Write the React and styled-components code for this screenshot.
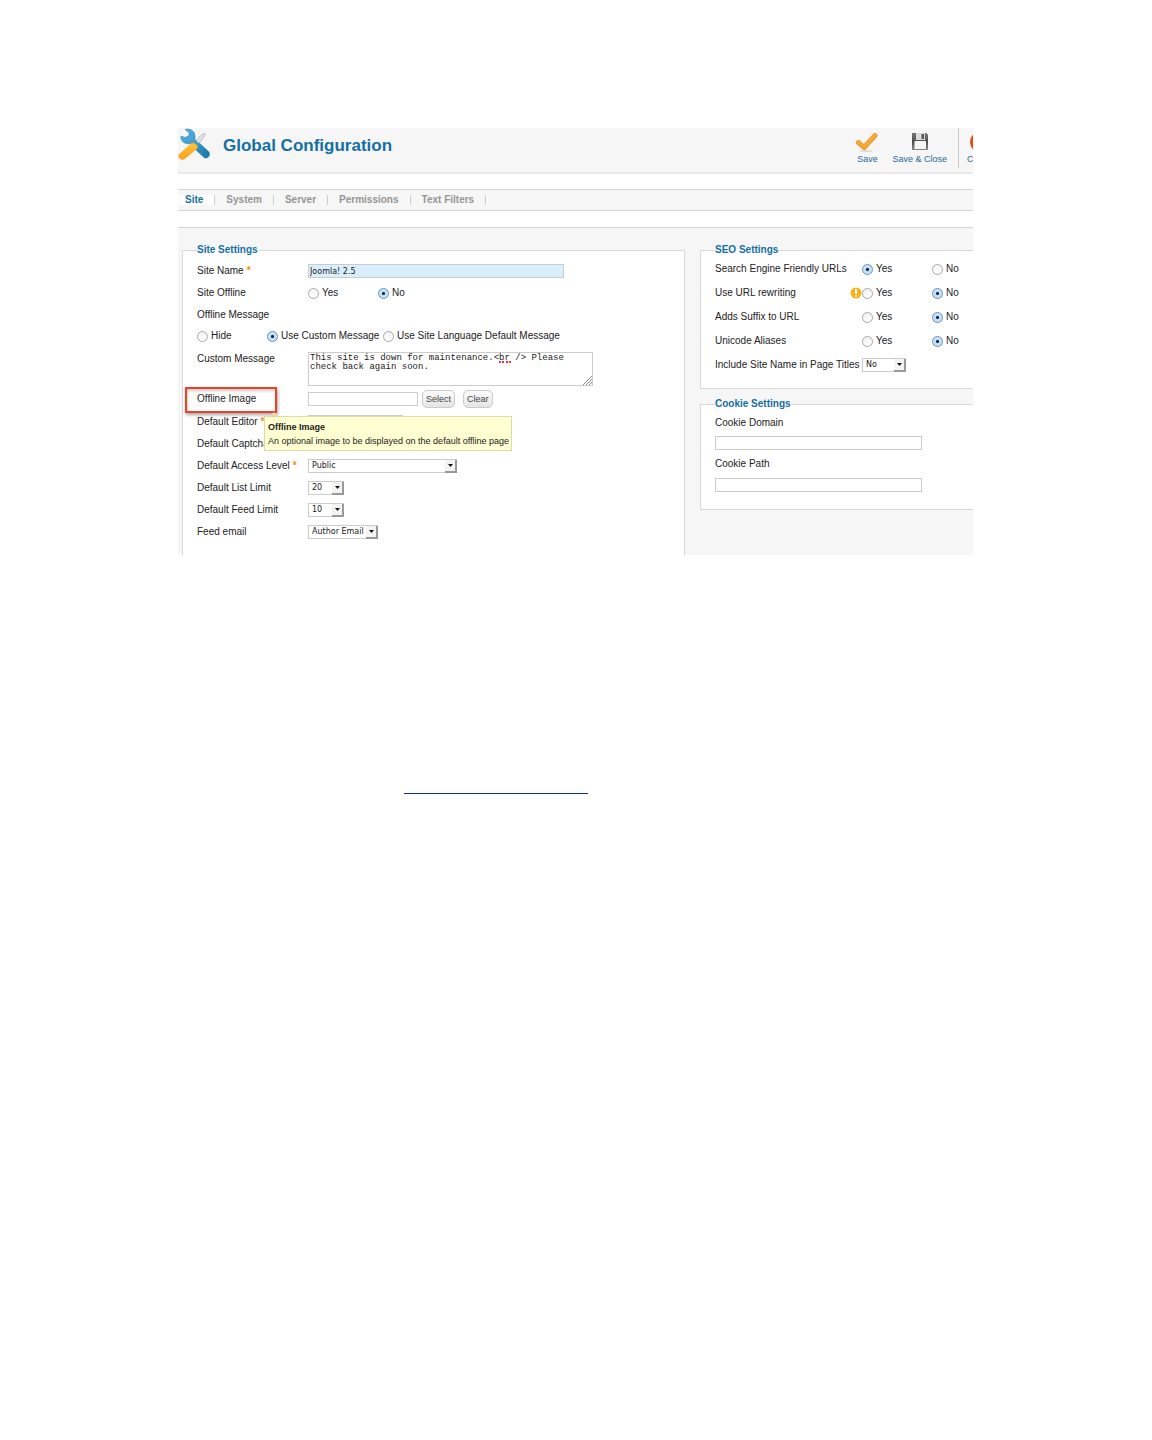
import React from "react";
import styled, { createGlobalStyle } from "styled-components";

const GlobalStyle = createGlobalStyle`
  * {
    box-sizing: border-box;
  }

  body {
    margin: 0;
    background-color: white;
    color: #222222;
    font-family: "Liberation Sans", Arial, sans-serif;
    font-size: 10px;
    line-height: 14px;
  }
`;

const Page = styled.div`
  padding: 128px 179px 40px 178px;
`;

const Screen = styled.main`
  overflow: hidden;
`;

const Header = styled.header`
  display: flex;
  height: 46px;
  background-color: #f6f6f6;
  border-bottom: 2px solid #e9e9e9;
`;

const Title = styled.h1`
  margin: 0 0 0 12px;
  color: #146fa5;
  font-size: 17px;
  line-height: 36px;
`;

const Toolbar = styled.div`
  display: flex;
  align-items: flex-start;
  margin-left: auto;
  margin-right: -22px;
`;

const ToolButton = styled.button`
  display: flex;
  flex-direction: column;
  align-items: center;
  padding: 4px 0 0;
  margin-right: ${(props) => props.$space || 0}px;
  border: none;
  background: none;
  color: #27699a;
  font-family: inherit;
  font-size: 9px;
  line-height: 12px;
  white-space: nowrap;
`;

const Divider = styled.div`
  width: 1px;
  height: 40px;
  margin: 0 8px 0 11px;
  background-color: #cccccc;
`;

const Tabs = styled.nav`
  display: flex;
  align-items: center;
  height: 22px;
  margin: 15px 0 16px;
  background-color: #f6f6f6;
  border-top: 1px solid #d5d5d5;
  border-bottom: 1px solid #d5d5d5;
`;

const Tab = styled.a`
  padding: 0 11px;
  border-right: 1px solid #cccccc;
  background-color: ${(props) => (props.$active ? "white" : "transparent")};
  color: ${(props) => (props.$active ? "#146fa5" : "#959595")};
  font-weight: bold;
  line-height: 10px;
  text-decoration: none;

  &:first-child {
    padding-left: 7px;
  }
`;

const Content = styled.form`
  display: grid;
  grid-template-columns: minmax(0, 503fr) minmax(0, 273fr);
  gap: 15px;
  padding: 15px 0 0 4px;
  background-color: #f6f6f6;
  border-top: 1px solid #d5d5d5;
`;

const Column = styled.div`
  display: flex;
  flex-direction: column;
  gap: 8px;
`;

const Panel = styled.fieldset`
  min-width: 0;
  margin: 0;
  padding: ${(props) => props.$padding};
  background-color: white;
  border: 1px solid #d9d9d9;
  ${(props) => props.$open && `border-${props.$open}: none;`}
`;

const Legend = styled.legend`
  padding: 0;
  color: #146fa5;
  font-weight: bold;
`;

const Row = styled.div`
  position: relative;
  display: grid;
  grid-template-columns: ${(props) => props.$columns || "111px 1fr"};
  align-items: center;
  min-height: ${(props) => props.$height || 22}px;
`;

const MessageRow = styled(Row)`
  align-items: start;
  padding-top: 6px;
  min-height: 41px;
`;

const Label = styled.label`
  white-space: nowrap;
`;

const LabelWithIcon = styled.div`
  display: flex;
  align-items: center;
  justify-content: space-between;
  white-space: nowrap;
`;

const Star = styled.span`
  margin-left: 3px;
  color: #f28c1e;
  font-weight: bold;
`;

const RadioGroup = styled.div`
  display: grid;
  grid-template-columns: ${(props) => props.$columns || "70px 1fr"};
  align-items: center;
  min-height: 20px;
`;

const RadioLabel = styled.label`
  display: flex;
  align-items: center;
  gap: 3px;
  white-space: nowrap;
`;

const RadioInput = styled.input`
  appearance: none;
  flex: none;
  width: 11px;
  height: 11px;
  margin: 0;
  border: 1px solid #a9a9a9;
  border-radius: 50%;
  background: linear-gradient(#f2f2f2, white);

  &:checked {
    border-color: #6d8fb5;
    background: radial-gradient(circle, #14263f 0 1px, #b9dcf8 2px, #cfe8fb 5px);
  }
`;

const TextInput = styled.input`
  display: block;
  width: ${(props) => props.$width}px;
  height: 14px;
  padding: 0 1px;
  border: 1px solid #cccccc;
  background-color: ${(props) => (props.$filled ? "#d9effd" : "white")};
  color: #222222;
  font-family: "DejaVu Sans", sans-serif;
  font-size: 8px;
`;

const MessageBox = styled.div`
  position: relative;
  width: 285px;
`;

const TextArea = styled.textarea`
  display: block;
  width: 100%;
  height: 34px;
  padding: 1px;
  border: 1px solid #cccccc;
  color: #222222;
  font-family: "Liberation Mono", monospace;
  font-size: 9px;
  line-height: 9px;
  resize: none;
  overflow: hidden;
`;

const Misspelling = styled.span`
  position: absolute;
  top: 9px;
  left: 191px;
  width: 12px;
  border-bottom: 2px dotted #ee3030;
`;

const Grip = styled.svg`
  position: absolute;
  right: 1px;
  bottom: 1px;
`;

const SelectBox = styled.div`
  position: relative;
  width: ${(props) => props.$width}px;
  height: 14px;
`;

const SelectInput = styled.select`
  appearance: none;
  display: block;
  width: 100%;
  height: 14px;
  padding: 0 3px;
  border: 1px solid #cccccc;
  border-radius: 0;
  background-color: white;
  color: #222222;
  font-family: "DejaVu Sans", sans-serif;
  font-size: 8px;
  line-height: 12px;
`;

const SelectArrow = styled.span`
  position: absolute;
  top: 1px;
  right: 0;
  display: flex;
  align-items: center;
  justify-content: center;
  width: 12px;
  height: 13px;
  background-color: #f4f4f4;
  border-right: 2px solid #999999;
  border-bottom: 2px solid #999999;
  pointer-events: none;
`;

const ImageField = styled.div`
  display: flex;
  align-items: center;
`;

const SmallButton = styled.button`
  height: 18px;
  margin-left: ${(props) => props.$space}px;
  padding: 0 3px 1px;
  border: 1px solid #cccccc;
  border-radius: 5px;
  background: linear-gradient(#fcfcfc, #e4e4e4);
  color: #444444;
  font-family: inherit;
  font-size: 9px;
`;

const Highlight = styled.div`
  position: absolute;
  top: 0;
  left: -12px;
  width: 92px;
  height: 26px;
  border: 2px solid #ea4127;
  box-shadow: 1px 2px 3px rgba(0, 0, 0, 0.35), inset 1px 2px 3px rgba(0, 0, 0, 0.2);
  pointer-events: none;
`;

const Tooltip = styled.div`
  position: absolute;
  z-index: 2;
  top: 29px;
  left: 67px;
  padding: 3px 2px 2px 3px;
  border: 1px solid #dcdcaa;
  background-color: #ffffd2;
  color: #222222;
  font-size: 9px;
  line-height: 14px;
  white-space: nowrap;

  &::before {
    content: "";
    position: absolute;
    top: -5px;
    left: 5px;
    border: 4px solid transparent;
    border-top: none;
    border-bottom: 4px solid #e3dcb0;
  }
`;

const TooltipTitle = styled.strong`
  display: block;
`;

const CookieLabel = styled(Label)`
  display: block;
  padding: ${(props) => (props.$first ? "5px 0 6px" : "7px 0 7px")};
`;

const BlankLink = styled.hr`
  width: 184px;
  margin: 238px 0 0 226px;
  border: none;
  border-top: 1px solid #0a2a94;
`;

const ToolsIcon = () => (
  <svg width="33" height="33" viewBox="0 0 33 33" aria-hidden="true">
    <defs>
      <linearGradient id="wrench" x1="0" y1="0" x2="1" y2="1">
        <stop offset="0" stopColor="#5db4e2" />
        <stop offset="0.5" stopColor="#3a9bcf" />
        <stop offset="1" stopColor="#0f749f" />
      </linearGradient>
      <linearGradient id="handle" x1="0" y1="0" x2="0" y2="1">
        <stop offset="0" stopColor="#ffc234" />
        <stop offset="1" stopColor="#fba31a" />
      </linearGradient>
    </defs>
    <path d="M26 5 L27.5 6.5 L24 12 L18 18 L15.5 15.5 L21 9 Z" fill="#dfe1e3" stroke="#a5a8ab" strokeWidth="0.6" />
    <path
      d="M7 1.5 C12 0 17 3 17 8 L17 11.5 L20 15 L22 15.5 L31 24 C33 28 29 31.5 26 29.5 L18 22 L17 19 L13 15.5 C7 17 2 13 3 8 L7 9.5 L11 7.5 L11 4.5 Z"
      fill="url(#wrench)"
      stroke="#2b7ba8"
      strokeWidth="0.5"
    />
    <path
      d="M14 15 C17 15 20 17 19.5 20 L7 30.5 C4 33 -1 30 1 26.5 Z"
      fill="url(#handle)"
      stroke="#f0a022"
      strokeWidth="0.5"
    />
  </svg>
);

const CheckIcon = () => (
  <svg width="22" height="21" viewBox="0 0 22 21" aria-hidden="true">
    <ellipse cx="10" cy="19" rx="7" ry="1" fill="#dddddd" />
    <path d="M2.5 10.5 L8 15.5 L19 3.5" fill="none" stroke="#ee9a2b" strokeWidth="5" strokeLinejoin="round" strokeLinecap="round" />
    <path d="M2.5 10 L8 15 L19 3" fill="none" stroke="#f8a93c" strokeWidth="3" strokeLinejoin="round" strokeLinecap="round" />
  </svg>
);

const DiskIcon = () => (
  <svg width="18" height="21" viewBox="0 0 18 21" aria-hidden="true">
    <defs>
      <linearGradient id="disk" x1="0" y1="0" x2="0" y2="1">
        <stop offset="0" stopColor="#777777" />
        <stop offset="0.5" stopColor="#4d4d4d" />
        <stop offset="1" stopColor="#8a8a8a" />
      </linearGradient>
    </defs>
    <path d="M1 1 H15.5 L17 3 V18 H1 Z" fill="url(#disk)" />
    <rect x="5" y="1" width="9" height="7" fill="#dcdcdc" />
    <rect x="10.5" y="2" width="2.5" height="5" fill="#555555" />
    <rect x="3.5" y="9" width="11.5" height="8" rx="0.5" fill="#f5f5f5" />
  </svg>
);

const CancelIcon = () => (
  <svg width="24" height="21" viewBox="0 0 24 21" overflow="visible" aria-hidden="true">
    <circle cx="12" cy="10" r="11" fill="#ea4a12" />
    <path d="M8 6 L16 14 M16 6 L8 14" stroke="white" strokeWidth="3" />
  </svg>
);

const WarningIcon = () => (
  <svg width="12" height="12" viewBox="0 0 12 12" aria-hidden="true">
    <circle cx="6" cy="6" r="5.5" fill="#fbb017" />
    <path d="M6 2 V7" stroke="white" strokeWidth="2" />
    <circle cx="6" cy="9" r="1" fill="white" />
  </svg>
);

const Radio = ({ name, text, checked }) => (
  <RadioLabel>
    <RadioInput type="radio" name={name} defaultChecked={checked} />
    {text}
  </RadioLabel>
);

const YesNo = ({ name, value }) => (
  <RadioGroup role="radiogroup" aria-label={name}>
    <Radio name={name} text="Yes" checked={value === "Yes"} />
    <Radio name={name} text="No" checked={value === "No"} />
  </RadioGroup>
);

const Select = ({ id, width, value }) => (
  <SelectBox $width={width}>
    <SelectInput id={id}>{value && <option>{value}</option>}</SelectInput>
    <SelectArrow>
      <svg width="5" height="3" viewBox="0 0 5 3">
        <path d="M0 0 H5 L2.5 3 Z" fill="#111111" />
      </svg>
    </SelectArrow>
  </SelectBox>
);

const tabs = ["Site", "System", "Server", "Permissions", "Text Filters"];

const selects = [
  { id: "editor", label: "Default Editor", required: true, width: 95 },
  { id: "captcha", label: "Default Captcha", width: 95 },
  { id: "access", label: "Default Access Level", required: true, width: 149, value: "Public" },
  { id: "list-limit", label: "Default List Limit", width: 36, value: "20" },
  { id: "feed-limit", label: "Default Feed Limit", width: 36, value: "10" },
  { id: "feed-email", label: "Feed email", width: 70, value: "Author Email" },
];

const seoOptions = [
  { label: "Search Engine Friendly URLs", value: "Yes" },
  { label: "Use URL rewriting", value: "No", warning: true },
  { label: "Adds Suffix to URL", value: "No" },
  { label: "Unicode Aliases", value: "No" },
];

const SiteSettings = () => (
  <Panel $padding="3px 14px 12px" $open="bottom">
    <Legend>Site Settings</Legend>
    <Row>
      <Label htmlFor="site-name">
        Site Name<Star>*</Star>
      </Label>
      <TextInput id="site-name" $width={256} $filled defaultValue="Joomla! 2.5" />
    </Row>
    <Row>
      <span>Site Offline</span>
      <YesNo name="Site Offline" value="No" />
    </Row>
    <Row>
      <span>Offline Message</span>
    </Row>
    <RadioGroup $columns="70px 116px 1fr" role="radiogroup" aria-label="Offline Message">
      <Radio name="message" text="Hide" />
      <Radio name="message" text="Use Custom Message" checked />
      <Radio name="message" text="Use Site Language Default Message" />
    </RadioGroup>
    <MessageRow>
      <Label htmlFor="custom-message">Custom Message</Label>
      <MessageBox>
        <TextArea
          id="custom-message"
          spellCheck={false}
          defaultValue="This site is down for maintenance.<br /> Please check back again soon."
        />
        <Misspelling />
        <Grip width="9" height="9" viewBox="0 0 9 9" aria-hidden="true">
          <path d="M0 9 L9 0 M3 9 L9 3 M6 9 L9 6" stroke="#888888" />
        </Grip>
      </MessageBox>
    </MessageRow>
    <Row $height={24}>
      <Label htmlFor="offline-image">Offline Image</Label>
      <ImageField>
        <TextInput id="offline-image" $width={110} />
        <SmallButton type="button" $space={4}>
          Select
        </SmallButton>
        <SmallButton type="button" $space={8}>
          Clear
        </SmallButton>
      </ImageField>
      <Highlight />
      <Tooltip role="tooltip">
        <TooltipTitle>Offline Image</TooltipTitle>
        An optional image to be displayed on the default offline page
      </Tooltip>
    </Row>
    {selects.map(({ id, label, required, width, value }) => (
      <Row key={id}>
        <Label htmlFor={id}>
          {label}
          {required && <Star>*</Star>}
        </Label>
        <Select id={id} width={width} value={value} />
      </Row>
    ))}
  </Panel>
);

const SeoSettings = () => (
  <Panel $padding="0 0 11px 14px" $open="right">
    <Legend>SEO Settings</Legend>
    {seoOptions.map(({ label, value, warning }) => (
      <Row key={label} $columns="147px 1fr" $height={24}>
        <LabelWithIcon>
          {label}
          {warning && <WarningIcon />}
        </LabelWithIcon>
        <YesNo name={label} value={value} />
      </Row>
    ))}
    <Row $columns="147px 1fr" $height={24}>
      <Label htmlFor="page-titles">Include Site Name in Page Titles</Label>
      <Select id="page-titles" width={44} value="No" />
    </Row>
  </Panel>
);

const CookieSettings = () => (
  <Panel $padding="0 0 17px 14px" $open="right">
    <Legend>Cookie Settings</Legend>
    <CookieLabel htmlFor="cookie-domain" $first>
      Cookie Domain
    </CookieLabel>
    <TextInput id="cookie-domain" $width={207} />
    <CookieLabel htmlFor="cookie-path">Cookie Path</CookieLabel>
    <TextInput id="cookie-path" $width={207} />
  </Panel>
);

const App = () => {
  return (
    <Page>
      <GlobalStyle />
      <Screen>
        <Header>
          <ToolsIcon />
          <Title>Global Configuration</Title>
          <Toolbar>
            <ToolButton type="button" $space={14}>
              <CheckIcon />
              Save
            </ToolButton>
            <ToolButton type="button">
              <DiskIcon />
              Save &amp; Close
            </ToolButton>
            <Divider />
            <ToolButton type="button">
              <CancelIcon />
              Cancel
            </ToolButton>
          </Toolbar>
        </Header>
        <Tabs>
          {tabs.map((tab, index) => (
            <Tab key={tab} href="#" $active={index === 0}>
              {tab}
            </Tab>
          ))}
        </Tabs>
        <Content>
          <SiteSettings />
          <Column>
            <SeoSettings />
            <CookieSettings />
          </Column>
        </Content>
      </Screen>
      <BlankLink />
    </Page>
  );
};

export default App;
